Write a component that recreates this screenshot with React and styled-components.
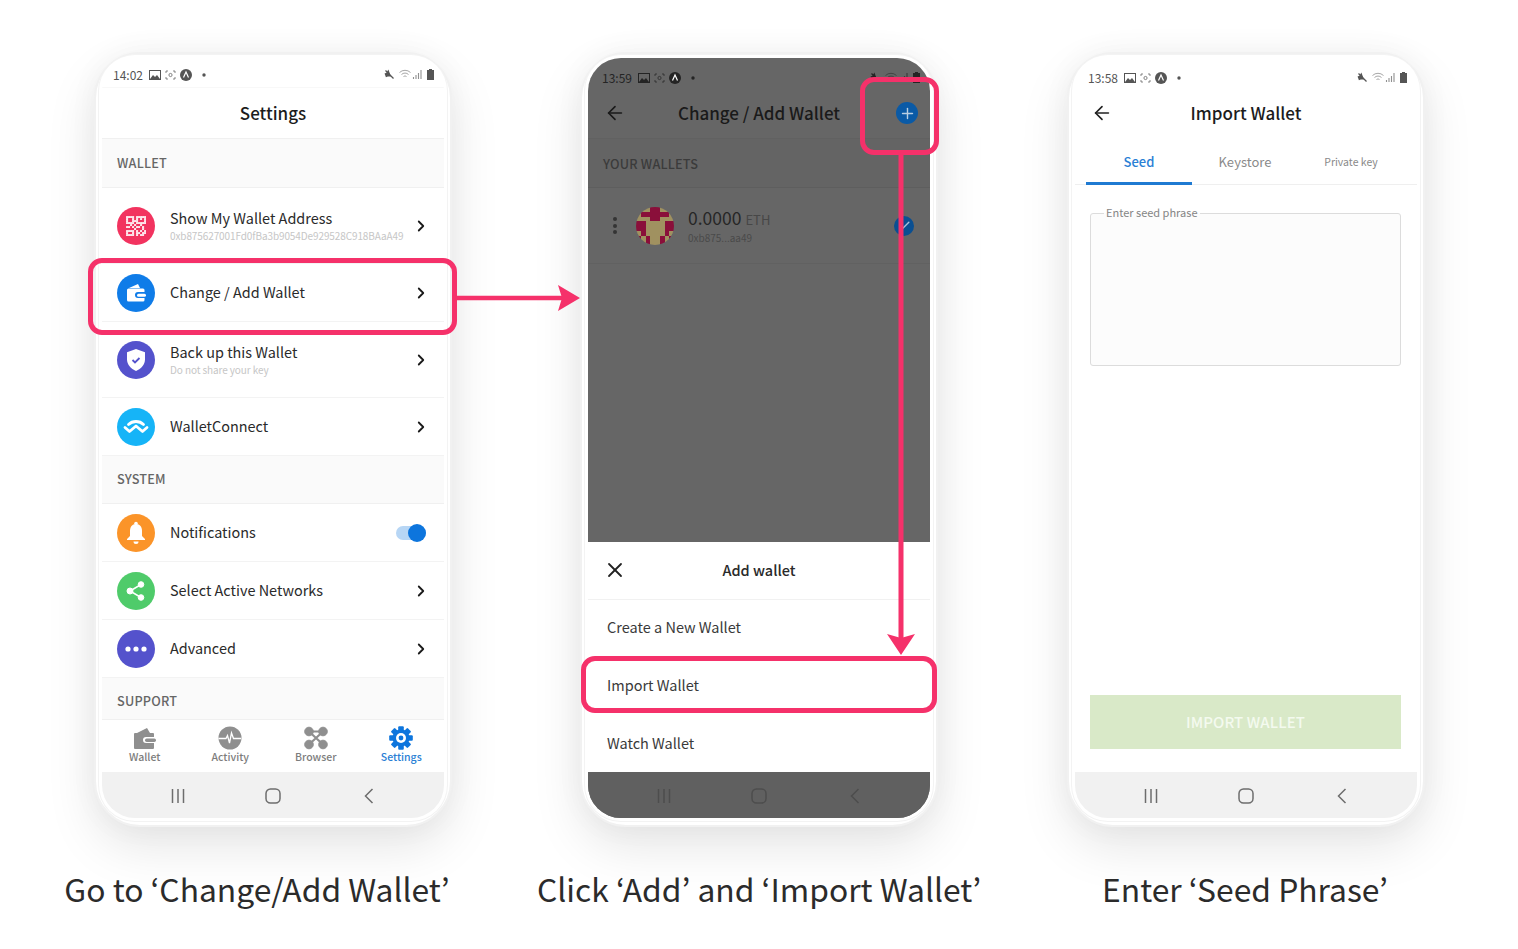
import React from "react";
import styled, { createGlobalStyle } from "styled-components";
import { ArrowLeft, ChevronRight, X, Plus, Check } from "lucide-react";

const Global = createGlobalStyle`
  html, body { margin: 0; padding: 0; background: #fff; }
  body { font-family: "Noto Sans CJK KR", "Noto Sans", sans-serif; }
  * { box-sizing: border-box; }
`;

const PINK = "#f5316a";
const BLUE = "#0d75dd";

const Stage = styled.div`
  position: relative; width: 1518px; height: 949px; padding: 52px 30px 0 30px;
  display: flex; overflow: hidden; background: #fff;
`;
const Column = styled.section`
  width: 486px; display: flex; flex-direction: column; align-items: center;
`;
const Caption = styled.h2`
  margin: 37px ${p => p.$shift || 0}px 0 0; font-size: 31.8px; line-height: 48px; font-weight: 400; color: #2b2b2b; white-space: nowrap;
  font-family: "Noto Sans CJK KR", "Noto Sans", sans-serif;
`;
const Phone = styled.div`
  width: 358px; height: 775px; flex: none; border: 2px solid #f1f1f1; border-radius: 46px; padding: 4px 6px 7px;
  margin-left: ${p => p.$nudge || 0}px;
  background: #fff; box-shadow: 0 20px 50px rgba(0,0,0,.10), 0 0 30px rgba(0,0,0,.04);
`;
const Screen = styled.div`
  position: relative; width: 342px; height: 760px; border-radius: 33px; overflow: hidden; display: flex; flex-direction: column;
  background: ${p => p.$dark ? "#666" : "#fff"};
  box-shadow: 0 0 0 3px #fff, 0 0 0 4px #f3f3f3;
`;
const Status = styled.div`
  height: 30px; flex: none; display: flex; align-items: center; padding: ${p => p.$top}px 10px 0 ${p => p.$left}px;
  color: ${p => p.$dark ? "#242424" : "#555"}; font-size: 12px; line-height: 16px;
  border-bottom: 1px solid ${p => p.$line ? "#f8f8f8" : "transparent"};
`;
const Time = styled.span`margin-right: 4px; width: 32px;`;
const StatusIcons = styled.span`display: flex; align-items: center; gap: 4px; color: inherit;`;
const Spacer = styled.span`flex: 1;`;
const Header = styled.header`
  height: 51px; flex: none; position: relative; display: flex; align-items: center; justify-content: center;
  border-bottom: 1px solid ${p => p.$dark ? "#616161" : p.$plain ? "transparent" : "#f0f0f0"};
`;
const Title = styled.h1`
  margin: 0; font-size: 17px; line-height: 24px; font-weight: 500; color: ${p => p.$dark ? "#1a1a1a" : "#1c1c1c"};
`;
const BackBtn = styled.span`
  position: absolute; left: 16px; top: 14px; display: flex; color: ${p => p.$dark ? "#1a1a1a" : "#222"};
`;
const AddBtn = styled.span`
  position: absolute; right: 12px; top: 14px; width: 22px; height: 22px; border-radius: 50%;
  background: #0a5aa6; color: #b9cee2; display: flex; align-items: center; justify-content: center;
`;
const Section = styled.div`
  height: ${p => p.$h}px; flex: none; display: flex; align-items: center; padding: ${p => p.$pt || 0}px 0 ${p => p.$pb || 0}px 15px;
  background: ${p => p.$dark ? "#646464" : "#fafafa"}; border-bottom: 1px solid ${p => p.$dark ? "#5e5e5e" : "#f0f0f0"};
  color: ${p => p.$dark ? "#3b3b3b" : "#666"}; font-size: 12.7px; font-weight: 500; letter-spacing: .2px;
`;
const Row = styled.div`
  height: ${p => p.$h}px; flex: none; display: flex; align-items: center; padding: 0 15px; gap: 15px;
  border-bottom: 1px solid #f3f3f3;
`;
const Badge = styled.span`
  width: 38px; height: 38px; flex: none; border-radius: 50%; background: ${p => p.$c};
  display: flex; align-items: center; justify-content: center;
`;
const RowBody = styled.div`flex: 1; min-width: 0; display: flex; flex-direction: column; padding-bottom: 2px;`;
const RowTitle = styled.span`font-size: 14.45px; line-height: 20px; color: #2a2a2a;`;
const RowSub = styled.span`margin-top: 1px; font-size: 10px; line-height: 13px; color: #c6c6c6; white-space: nowrap; letter-spacing: -0.1px;`;
const Chevron = styled.span`width: 18px; height: 18px; flex: none; display: flex; color: #1a1a1a; margin-right: -1px;`;
const Toggle = styled.span`
  position: relative; width: 30px; height: 14px; margin-right: 3px; border-radius: 7px; background: #b7d6f5; flex: none;
`;
const Knob = styled.span`
  position: absolute; right: 0; top: -2px; width: 18px; height: 18px; border-radius: 50%; background: ${BLUE};
`;
const TabBar = styled.nav`
  height: 52px; flex: none; display: grid; grid-template-columns: repeat(4, 1fr); background: #fff;
`;
const Tab = styled.div`
  display: flex; flex-direction: column; align-items: center; padding-top: 6px;
  font-size: 10.5px; line-height: 12px; font-weight: 500; color: ${p => p.$on ? "#2a7fd5" : "#7d7d7d"};
  svg { display: block; margin-bottom: 1px; }
`;
const NavBar = styled.div`
  margin-top: ${p => p.$tight ? 0 : "auto"}; height: 46px; flex: none; display: flex; align-items: center; justify-content: center; gap: 71.5px;
  padding-top: 2px;
  background: ${p => p.$dark ? "#606060" : "#f1f1f1"}; color: ${p => p.$dark ? "#4d4d4d" : "#6d6d6d"};
  svg { display: block; }
`;
const WalletRow = styled.div`
  height: 76px; flex: none; display: flex; align-items: center; padding: 0 16px 0 25px; border-bottom: 1px solid #616161;
`;
const Kebab = styled.span`
  width: 5px; display: flex; flex-direction: column; gap: 2.5px; margin-right: 18px;
  i { width: 4px; height: 4px; border-radius: 50%; background: #343434; }
`;
const Balance = styled.div`flex: 1; margin-left: 14px; display: flex; flex-direction: column;`;
const Amount = styled.span`font-size: 17.5px; line-height: 22px; color: #262626;`;
const Unit = styled.span`font-size: 13px; color: #474747; margin-left: 4px;`;
const Short = styled.span`font-size: 10px; line-height: 14px; color: #4a4a4a;`;
const CheckMark = styled.span`
  width: 20px; height: 20px; border-radius: 50%; background: #0a4f92; color: #a8c0d8;
  display: flex; align-items: center; justify-content: center;
`;
const Sheet = styled.div`
  position: absolute; left: 0; right: 0; top: 484px; height: 230px; background: #fff; display: flex; flex-direction: column;
`;
const SheetHead = styled.div`
  position: relative; height: 58px; flex: none; display: flex; align-items: center; justify-content: center; padding-bottom: 2px;
  border-bottom: 1px solid #f1f1f1; font-size: 14.5px; font-weight: 500; color: #2a2a2a;
`;
const SheetClose = styled.span`position: absolute; left: 15px; top: 16px; display: flex; color: #222;`;
const SheetRow = styled.div`
  height: 58px; flex: none; display: flex; align-items: center; padding: 0 0 5px 19px; font-size: 14.5px; color: #3a3a3a;
`;
const Tabs = styled.div`
  height: 46px; flex: none; display: grid; grid-template-columns: repeat(3, 106px); padding-left: 11px;
  border-bottom: 1px solid #efefef;
`;
const TabLabel = styled.div`
  display: flex; align-items: center; justify-content: center; padding-top: 1px; height: 46px;
  font-size: ${p => p.$size}px; font-weight: ${p => p.$on ? 500 : 400}; color: ${p => p.$on ? "#2a7fd5" : "#8a8a8a"};
  border-bottom: ${p => p.$on ? "3px solid #1f7ad2" : "3px solid transparent"};
`;
const Field = styled.fieldset`
  margin: 20px 16px 0 15px; padding: 0; height: 161px; border: 1.5px solid #dcdcdc; border-radius: 3px; background: #fcfcfc;
`;
const Legend = styled.legend`
  margin-left: 13px; padding: 0 2px 2px; font-size: 11px; line-height: 14px; color: #858585;
`;
const Submit = styled.button`
  margin: auto 16px 23px 15px; height: 54px; flex: none; border: 0; padding-bottom: 2px; background: #d9e9c8; color: #f4faef;
  font: 500 15px "Noto Sans CJK KR", sans-serif; letter-spacing: .1px;
`;
const Callout = styled.div`
  position: absolute; left: ${p => p.$x}px; top: ${p => p.$y}px; width: ${p => p.$w}px; height: ${p => p.$h}px;
  border: 5px solid ${PINK}; border-radius: 14px; pointer-events: none;
`;
const ArrowLayer = styled.svg`position: absolute; left: 0; top: 0; pointer-events: none;`;

const StatusLeft = ({ time }) => (
  <>
    <Time>{time}</Time>
    <StatusIcons>
      <svg width="12" height="10" viewBox="0 0 12 10"><rect x=".5" y=".5" width="11" height="9" fill="none" stroke="currentColor"/><path d="M1 9l3-4 2 2 2-2 3 4z" fill="currentColor"/></svg>
      <svg width="11" height="10" viewBox="0 0 11 10" fill="none" stroke="currentColor" strokeWidth=".7"><path d="M1 3V1h2M8 1h2v2M10 7v2H8M3 9H1V7"/><circle cx="5.5" cy="5" r="1.6"/></svg>
      <svg width="12" height="12" viewBox="0 0 12 12"><circle cx="6" cy="6" r="6" fill="currentColor"/><path d="M3.500 8.500L6 3l2.500 5.500" fill="none" stroke="#fff" strokeWidth="1.2"/></svg>
      <svg width="12" height="12" viewBox="0 0 12 12"><circle cx="8" cy="6" r="1.7" fill="currentColor"/></svg>
    </StatusIcons>
  </>
);
const StatusRight = () => (
  <StatusIcons>
    <svg width="11" height="11" viewBox="0 0 11 11"><path d="M1 3h2l3-2.500V8L3 7H1z" fill="currentColor" transform="rotate(-20 5 5)"/><path d="M1.500 1.500l8 8" stroke="currentColor" strokeWidth="1.3"/></svg>
    <svg width="24" height="11" viewBox="0 0 24 11" fill="none" stroke="currentColor" strokeWidth=".8" opacity=".65"><path d="M.5 3.500a8 8 0 0 1 11 0M2.500 5.500a5 5 0 0 1 7 0M4.500 7.500a2.400 2.400 0 0 1 3 0"/><path d="M14.500 10V8M17 10V6M19.500 10V4M22 10V1" strokeWidth="1.1"/></svg>
    <svg width="7" height="11" viewBox="0 0 7 11"><path d="M2 0h3v1h2v10H0V1h2z" fill="currentColor"/></svg>
  </StatusIcons>
);

const QR = ["1111011111", "1001010101", "1001110001", "1111011111", "0010100100", "1101011010", "0000100010", "1111010101", "1001011011", "1111010110"];
const QrIcon = () => (
  <svg width="20" height="20" viewBox="0 0 20 20" fill="#fff" opacity=".88">
    {QR.flatMap((r, y) => [...r].map((c, x) => c === "1" && (
      <rect key={`${x}-${y}`} x={x * 2} y={y * 2} width="2.100" height="2.100" rx=".5" />
    )))}
  </svg>
);
const WalletIcon = () => (
  <svg width="22" height="20" viewBox="0 0 22 20" fill="#fff">
    <path d="M4 5l9-4 2 4z"/><path d="M2 7a1.500 1.500 0 0 1 1.500-1.500H18A1.500 1.500 0 0 1 19.500 7v2H13a3 3 0 0 0 0 6h6.500v2a1.500 1.500 0 0 1-1.500 1.500H3.500A1.500 1.500 0 0 1 2 17z"/><rect x="12" y="10.700" width="9" height="3" rx="1.500"/>
  </svg>
);
const ShieldIcon = () => (
  <svg width="22" height="24" viewBox="0 0 22 24"><path d="M11 1l9 3.200v7c0 5.500-3.800 9.500-9 11.800-5.200-2.300-9-6.300-9-11.800v-7z" fill="#fff"/><path d="M7.500 12l2.500 2.500 4.500-4.500" fill="none" stroke="#5452cc" strokeWidth="1.800"/></svg>
);
const WcIcon = () => (
  <svg width="26" height="18" viewBox="0 0 26 18" fill="none" stroke="#fff" strokeWidth="2.800" strokeLinecap="round" strokeLinejoin="round"><path d="M5.500 6.500c4-4 11-4 15 0"/><path d="M2 9.500l4.500 4 6.500-5.500 6.500 5.500 4.500-4"/></svg>
);
const BellIcon = () => (
  <svg width="22" height="24" viewBox="0 0 22 24" fill="#fff"><circle cx="11" cy="2.500" r="1.800"/><path d="M11 3c4 0 6 3 6 7v5l3 3v1H2v-1l3-3v-5c0-4 2-7 6-7z"/><path d="M8.500 20.500h5a2.500 2.500 0 0 1-5 0z"/></svg>
);
const ShareIcon = () => (
  <svg width="22" height="22" viewBox="0 0 22 22" fill="#fff" stroke="#fff"><circle cx="16" cy="4.500" r="2.800"/><circle cx="16" cy="17.500" r="2.800"/><circle cx="5" cy="11" r="3"/><path d="M16 4.500L5 11l11 6.500" fill="none" strokeWidth="1.500"/></svg>
);
const DotsIcon = () => (
  <svg width="24" height="6" viewBox="0 0 24 6" fill="#fff"><circle cx="4" cy="3" r="2.600"/><circle cx="12" cy="3" r="2.600"/><circle cx="20" cy="3" r="2.600"/></svg>
);

const TabWallet = () => (
  <svg width="26" height="24" viewBox="0 0 26 24" fill="#8f8f8f"><path d="M5 7l10-5 3 5z"/><path d="M2 8a1 1 0 0 1 1-1h18a1 1 0 0 1 1 1v3h-8a3 3 0 0 0 0 6h8v5a1 1 0 0 1-1 1H3a1 1 0 0 1-1-1z"/><rect x="13" y="12.500" width="11" height="3.500" rx="1.700"/></svg>
);
const TabActivity = () => (
  <svg width="26" height="24" viewBox="0 0 26 24"><circle cx="13" cy="12" r="11.500" fill="#8f8f8f"/><path d="M1.500 12.500H9l1.500-3 2 7.500 2-10 2 5.500h7.500" fill="none" stroke="#fff" strokeWidth="1.300"/></svg>
);
const TabBrowser = () => (
  <svg width="26" height="24" viewBox="0 0 26 24" fill="#8f8f8f" stroke="#8f8f8f"><circle cx="6" cy="5.500" r="4.300"/><circle cx="20" cy="5.500" r="4.300"/><circle cx="6" cy="18.500" r="4.300"/><circle cx="20" cy="18.500" r="4.300"/><path d="M6 5.500h14M20 5.500L6 18.500M6 5.500l14 13" fill="none" strokeWidth="2.200"/></svg>
);
const TabGear = () => (
  <svg width="26" height="24" viewBox="0 0 26 24">
    <g fill={BLUE} transform="translate(13 12)">
      {[0, 45, 90, 135, 180, 225, 270, 315].map(a => (
        <rect key={a} x="-2.800" y="-11.800" width="5.600" height="6" rx="1" transform={`rotate(${a})`} />
      ))}
      <circle r="8.500" />
      <circle r="5" fill="#fff" />
      <circle r="2.400" />
    </g>
  </svg>
);

const NavKeys = () => (
  <>
    <svg width="24" height="16" viewBox="0 0 24 16" stroke="currentColor" strokeWidth="1.500"><path d="M6.500 1v14M12 1v14M17.500 1v14"/></svg>
    <svg width="24" height="16" viewBox="0 0 24 16" fill="none" stroke="currentColor" strokeWidth="1.500"><rect x="5" y="1" width="14" height="14" rx="4.500"/></svg>
    <svg width="24" height="16" viewBox="0 0 24 16" fill="none" stroke="currentColor" strokeWidth="1.500"><path d="M15.500 1L8.500 8l7 7"/></svg>
  </>
);

const PIX = ["TTTCCTTT", "TCCCCCCT", "TTTCCTTT", "CCTTTTCC", "CCTTTTCC", "TCTTTTCT", "CTCTTCTC", "TTCTTCTT"];
const Identicon = () => (
  <svg width="38" height="38" viewBox="0 0 8 8" shapeRendering="crispEdges" style={{ borderRadius: "50%", flex: "none" }}>
    {PIX.flatMap((r, y) => [...r].map((c, x) => (
      <rect key={`${x}-${y}`} x={x} y={y} width="1.020" height="1.020" fill={c === "C" ? "#8a0f3a" : "#a09160"} />
    )))}
  </svg>
);

const Chev = () => <Chevron><ChevronRight size={18} strokeWidth={2.400} /></Chevron>;

const SETTINGS_TOP = [
  { h: 76, c: "#f2335f", icon: <QrIcon />, t: "Show My Wallet Address", s: "0xb875627001Fd0fBa3b9054De929528C918BAaA49" },
  { h: 58, c: "#0f7ce8", icon: <WalletIcon />, t: "Change / Add Wallet" },
  { h: 76, c: "#5452cc", icon: <ShieldIcon />, t: "Back up this Wallet", s: "Do not share your key" },
  { h: 58, c: "#16b4f7", icon: <WcIcon />, t: "WalletConnect" },
];
const SETTINGS_SYS = [
  { c: "#fb9429", icon: <BellIcon />, t: "Notifications", toggle: true },
  { c: "#4fcb6a", icon: <ShareIcon />, t: "Select Active Networks" },
  { c: "#5452cc", icon: <DotsIcon />, t: "Advanced" },
];
const SettingRow = ({ h = 58, c, icon, t, s, toggle }) => (
  <Row $h={h}>
    <Badge $c={c}>{icon}</Badge>
    <RowBody>
      <RowTitle>{t}</RowTitle>
      {s && <RowSub>{s}</RowSub>}
    </RowBody>
    {toggle ? <Toggle><Knob /></Toggle> : <Chev />}
  </Row>
);

const SettingsScreen = () => (
  <Screen>
    <Status $left={11} $top={4} $line><StatusLeft time="14:02" /><Spacer /><StatusRight /></Status>
    <Header><Title>Settings</Title></Header>
    <Section $h={49} $pb={2}>WALLET</Section>
    {SETTINGS_TOP.map(r => <SettingRow key={r.t} {...r} />)}
    <Section $h={48} $pb={2}>SYSTEM</Section>
    {SETTINGS_SYS.map(r => <SettingRow key={r.t} {...r} />)}
    <Section $h={42} $pt={4}>SUPPORT</Section>
    <TabBar>
      <Tab><TabWallet />Wallet</Tab>
      <Tab><TabActivity />Activity</Tab>
      <Tab><TabBrowser />Browser</Tab>
      <Tab $on><TabGear />Settings</Tab>
    </TabBar>
    <NavBar><NavKeys /></NavBar>
  </Screen>
);

const WalletsScreen = () => (
  <Screen $dark>
    <Status $dark $left={14} $top={10}><StatusLeft time="13:59" /><Spacer /><StatusRight /></Status>
    <Header $dark>
      <BackBtn $dark><ArrowLeft size={22} strokeWidth={1.800} /></BackBtn>
      <Title $dark>Change / Add Wallet</Title>
      <AddBtn><Plus size={17} strokeWidth={2} /></AddBtn>
    </Header>
    <Section $dark $h={49}>YOUR WALLETS</Section>
    <WalletRow>
      <Kebab><i /><i /><i /></Kebab>
      <Identicon />
      <Balance>
        <Amount>0.0000<Unit>ETH</Unit></Amount>
        <Short>0xb875...aa49</Short>
      </Balance>
      <CheckMark><Check size={13} strokeWidth={2.600} /></CheckMark>
    </WalletRow>
    <Sheet>
      <SheetHead>
        <SheetClose><X size={24} strokeWidth={1.800} /></SheetClose>
        Add wallet
      </SheetHead>
      <SheetRow>Create a New Wallet</SheetRow>
      <SheetRow>Import Wallet</SheetRow>
      <SheetRow>Watch Wallet</SheetRow>
    </Sheet>
    <NavBar $dark><NavKeys /></NavBar>
  </Screen>
);

const ImportScreen = () => (
  <Screen>
    <Status $left={13} $top={10}><StatusLeft time="13:58" /><Spacer /><StatusRight /></Status>
    <Header $plain>
      <BackBtn><ArrowLeft size={22} strokeWidth={1.800} /></BackBtn>
      <Title>Import Wallet</Title>
    </Header>
    <Tabs>
      <TabLabel $on $size={13}>Seed</TabLabel>
      <TabLabel $size={13}>Keystore</TabLabel>
      <TabLabel $size={10.500}>Private key</TabLabel>
    </Tabs>
    <Field><Legend>Enter seed phrase</Legend></Field>
    <Submit>IMPORT WALLET</Submit>
    <NavBar $tight><NavKeys /></NavBar>
  </Screen>
);

export default function App() {
  return (
    <>
      <Global />
      <Stage>
        <Column><Phone><SettingsScreen /></Phone><Caption $shift={32}>Go to ‘Change/Add Wallet’</Caption></Column>
        <Column><Phone><WalletsScreen /></Phone><Caption>Click ‘Add’ and ‘Import Wallet’</Caption></Column>
        <Column><Phone $nudge={2}><ImportScreen /></Phone><Caption>Enter ‘Seed Phrase’</Caption></Column>
        <Callout $x={88} $y={258} $w={369} $h={77} />
        <Callout $x={860} $y={77} $w={79} $h={78} />
        <Callout $x={581} $y={656} $w={356} $h={57} />
        <ArrowLayer width="1518" height="949" viewBox="0 0 1518 949">
          <path d="M452 298H562" stroke={PINK} strokeWidth="4.500" fill="none" />
          <path d="M558 285l22 13-22 13 4-13z" fill={PINK} />
          <path d="M901 152V640" stroke={PINK} strokeWidth="5" fill="none" />
          <path d="M887 634l14 4 14-4-14 21z" fill={PINK} />
        </ArrowLayer>
      </Stage>
    </>
  );
}
